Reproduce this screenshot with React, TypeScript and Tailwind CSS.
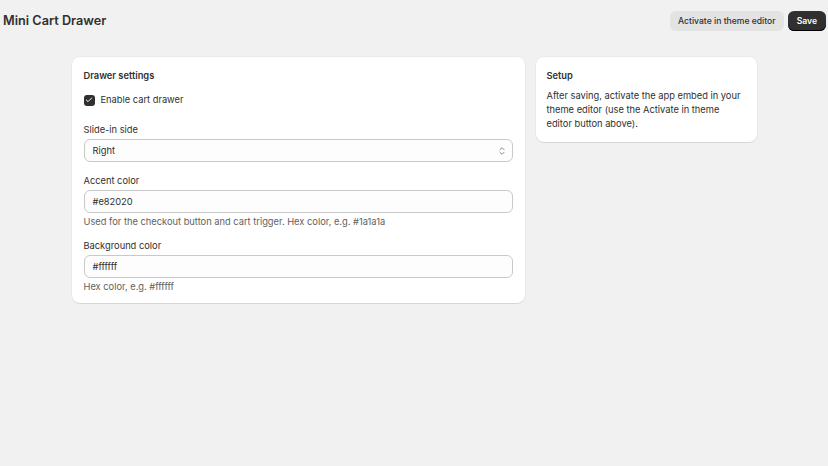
import { ChevronsUpDown, Check } from 'lucide-react'

const font = { fontFamily: 'Inter, "Noto Sans", sans-serif' }

function Field({ label, value, help, select }: { label: string; value: string; help?: string; select?: boolean }) {
  return (
    <div className={select ? 'flex flex-col mb-[2px]' : 'flex flex-col'}>
      <label className="text-[9.3px] leading-[14px] text-[#303030] mb-[2px]">{label}</label>
      <div className="h-[23px] rounded-[6px] border border-[#c9c9c9] bg-[#fdfdfd] flex items-center justify-between pl-[8px] pr-[5px]">
        <span className="text-[9.3px] text-[#303030]">{value}</span>
        {select && <ChevronsUpDown size={10} strokeWidth={1.8} className="text-[#616161]" />}
      </div>
      {help && <p className="text-[9.3px] leading-[14px] text-[#616161] mt-[2px]">{help}</p>}
    </div>
  )
}

export default function App() {
  return (
    <div style={font} className="min-h-[466px] w-full bg-[#f1f1f1] text-[#303030]">
      {/* Header */}
      <div className="flex items-center justify-between pl-[3px] pr-[2px] pt-[11px]">
        <h1 className="text-[12.7px] leading-[20px] font-semibold text-[#303030]">Mini Cart Drawer</h1>
        <div className="flex gap-[4px]">
          <button className="h-[20px] px-[8px] rounded-[6px] bg-[#e3e3e3] text-[8.6px] font-medium text-[#303030]">
            Activate in theme editor
          </button>
          <button className="h-[20px] px-[9px] rounded-[6px] bg-[#303030] text-[8.6px] font-semibold text-white shadow-[inset_0_-1px_0_#000]">
            Save
          </button>
        </div>
      </div>

      {/* Layout */}
      <div className="mx-auto w-[685px] mt-[26px] flex items-start gap-[11px]">
        <div className="w-[453px] bg-white rounded-[8px] shadow-[0_1px_0_rgba(0,0,0,0.08),0_0_0_1px_rgba(0,0,0,0.03)] px-[12px] pt-[12px] pb-[9px]">
          <h2 className="text-[9.3px] leading-[14px] font-semibold">Drawer settings</h2>
          <label className="flex items-center gap-[6px] mt-[10px]">
            <span className="w-[11px] h-[11px] rounded-[3px] bg-[#303030] flex items-center justify-center">
              <Check size={8} strokeWidth={3} className="text-white" />
            </span>
            <span className="text-[9.3px] leading-[14px]">Enable cart drawer</span>
          </label>
          <div className="flex flex-col gap-[10px] mt-[16px]">
            <Field label="Slide-in side" value="Right" select />
            <Field
              label="Accent color"
              value="#e82020"
              help="Used for the checkout button and cart trigger. Hex color, e.g. #1a1a1a"
            />
            <Field label="Background color" value="#ffffff" help="Hex color, e.g. #ffffff" />
          </div>
        </div>

        <div className="w-[221px] bg-white rounded-[8px] shadow-[0_1px_0_rgba(0,0,0,0.08),0_0_0_1px_rgba(0,0,0,0.03)] px-[11px] pt-[12px] pb-[11px]">
          <h2 className="text-[9.3px] leading-[14px] font-semibold">Setup</h2>
          <p className="text-[9.3px] leading-[14px] mt-[6px]">
            After saving, activate the app embed in your theme editor (use the Activate in theme editor button above).
          </p>
        </div>
      </div>
    </div>
  )
}
